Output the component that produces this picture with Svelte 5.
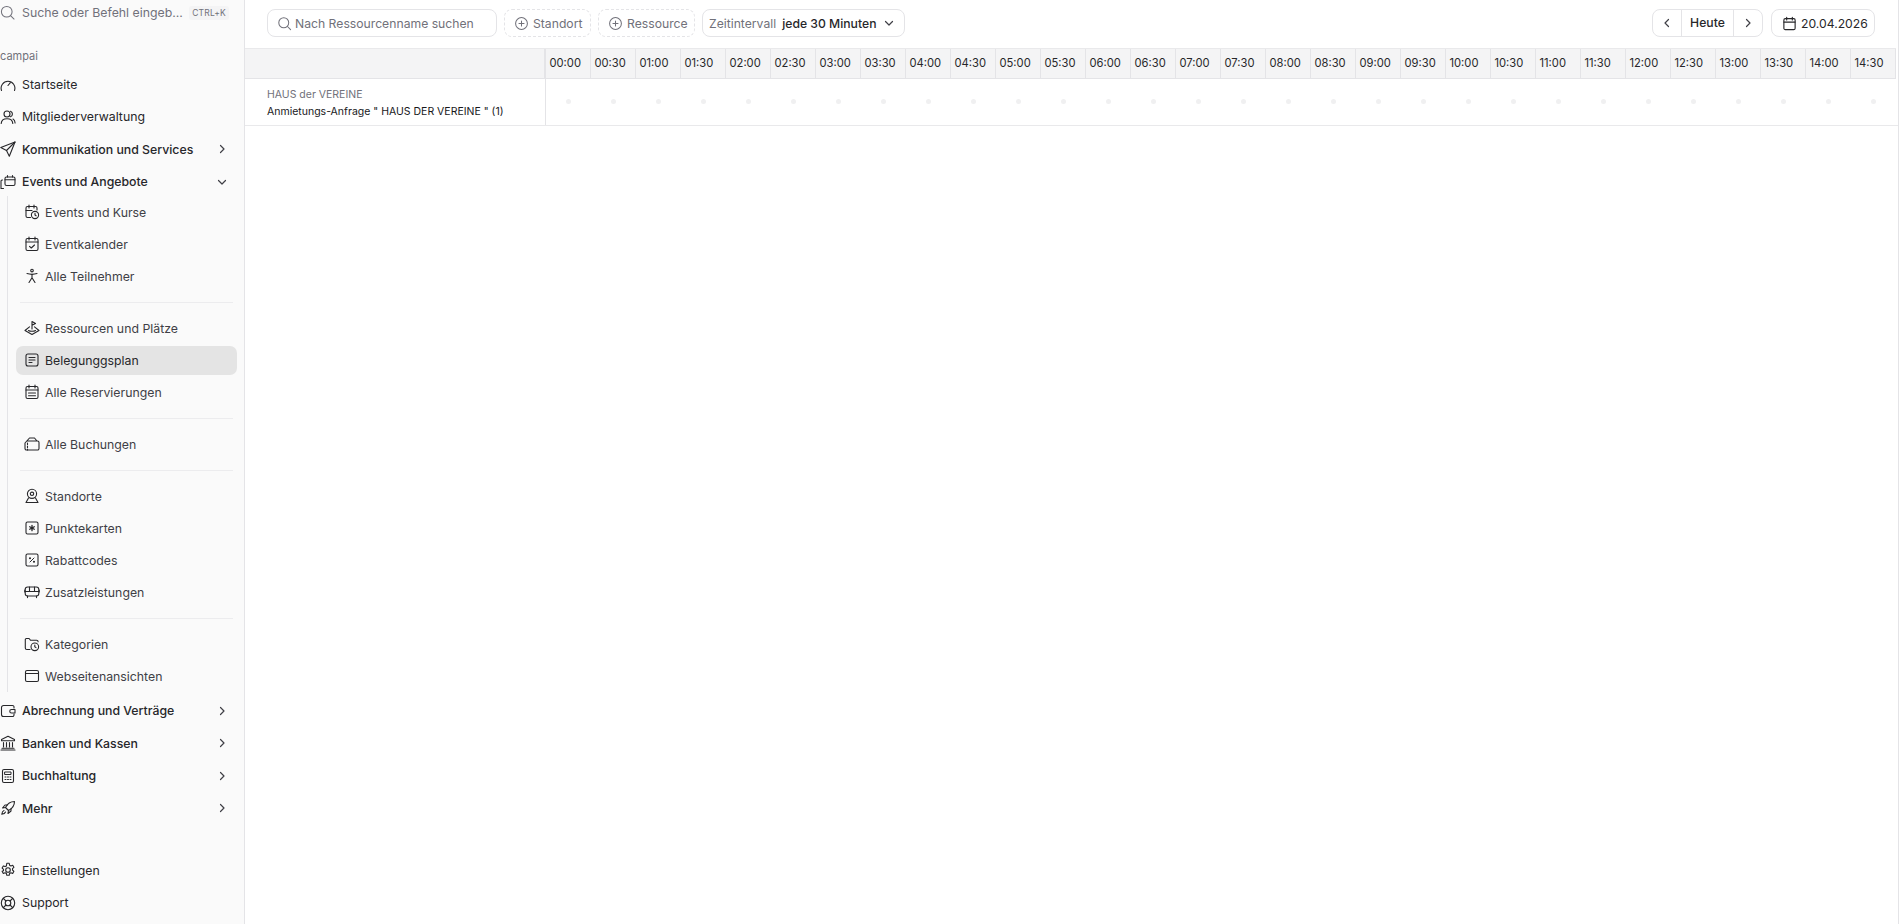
<script lang="ts">
  const icons: Record<string, string> = {
    gauge: '<path d="M1.500 14.500a6.900 6.900 0 1 1 13 0"/><path d="M8 9.500l2.400-2.800"/>',
    users: '<circle cx="7" cy="5" r="3"/><path d="M1.200 14.500c.2-3.200 2.600-4.800 5.800-4.800s5.600 1.600 5.800 4.800"/><path d="M10.500 2.200a3 3 0 0 1 0 5.600"/><path d="M13 10c1.300.7 2 2 2.100 4"/>',
    send: '<path d="M15 1L.8 6.500l5.700 3 2.800 5.700z"/><path d="M15 1L6.500 9.500"/>',
    stack: '<rect x="5" y="3" width="10" height="8.500" rx="1.500"/><path d="M5 5.800h10"/><path d="M7.500 1.500v1.500M12.500 1.500v1.500"/><path d="M2.500 6H2a1 1 0 0 0-1 1v7.500M1 14.500h2.500"/>',
    calclock: '<path d="M6.500 13.500H3.500A1.500 1.500 0 0 1 2 12V4a1.500 1.500 0 0 1 1.500-1.500h8A1.500 1.500 0 0 1 13 4v2"/><path d="M5 1v3M10 1v3M2 6.500h6"/><circle cx="11" cy="11" r="3.600"/><path d="M11 9.300V11l1.100.8"/>',
    calcheck: '<rect x="2" y="2.500" width="12" height="12" rx="1.500"/><path d="M5 1v3M11 1v3M2 6h12"/><path d="M5.500 10.300l1.800 1.700 3.200-3"/>',
    person: '<circle cx="8" cy="2.600" r="1.300"/><path d="M3 5.600c3.200 1 6.800 1 10 0"/><path d="M8 6.200v3.600M8 9.800L5 14.500M8 9.800l3 4.700"/>',
    golf: '<path d="M8 9V1.500l3.500 2L8 5.200"/><path d="M5.500 6.800L1 10.500 8 14.500l7-4-4.500-3.700"/><path d="M4.500 10.500c1.500 1 5.500 1 7 0"/>',
    plan: '<rect x="2" y="2" width="12" height="12" rx="2"/><path d="M5 5.500h6M5 8h6M5 10.500h3"/>',
    callist: '<rect x="2" y="2.500" width="12" height="12" rx="1.500"/><path d="M5 1v3M11 1v3M2 6h12M4.500 9h7M4.500 11.700h7"/>',
    bag: '<path d="M3 5h10.500a1.500 1.500 0 0 1 1.500 1.500v6a1.500 1.500 0 0 1-1.500 1.500H2.500A1.500 1.500 0 0 1 1 12.500V7l4.500-5h5L13 5"/><path d="M3.500 7v7" stroke-dasharray="1.500 1.500"/>',
    pin: '<circle cx="8" cy="5.800" r="4.600"/><circle cx="8" cy="5.800" r="1.700"/><path d="M4.500 10L2 14.500h12L11.500 10"/>',
    star: '<rect x="2" y="2" width="12" height="12" rx="1.500"/><path d="M8 5.300v5.400M5.700 6.700l4.600 2.600M10.300 6.700L5.700 9.300" stroke-width="1.300"/>',
    percent: '<rect x="2" y="2" width="12" height="12" rx="1.500"/><path d="M10 6l-4 4" stroke-width="1"/><circle cx="6" cy="6.200" r=".5"/><circle cx="10" cy="9.800" r=".5"/>',
    bus: '<rect x="1.200" y="3" width="13.600" height="9" rx="2.500"/><path d="M1.200 7.500h13.600M5.500 3v4.500M10.500 3v4.500"/><path d="M3.500 12v1.600M12.500 12v1.600"/><path d="M.8 6v2M15.200 6v2"/>',
    folderclock: '<path d="M6 13.500H2.800A1.500 1.500 0 0 1 1.300 12V3.500A1 1 0 0 1 2.300 2.500h2.800l1.500 1.800h6a1.500 1.500 0 0 1 1.500 1.500"/><circle cx="10.800" cy="10.800" r="3.800"/><path d="M10.800 9v1.800l1.200.8"/>',
    browser: '<rect x="1.500" y="2.500" width="13" height="11" rx="1.500"/><path d="M1.500 5.500h13"/>',
    wallet: '<path d="M14 5V4a1.500 1.500 0 0 0-1.500-1.500h-9A2 2 0 0 0 1.500 4.500v7a2 2 0 0 0 2 2h9a1.500 1.500 0 0 0 1.500-1.500v-1"/><path d="M15 6.500h-3.500a1.750 1.750 0 0 0 0 3.500H15z"/>',
    bank: '<path d="M8 1.200L1.500 4.500v1.300h13V4.500z"/><path d="M3.500 7.500v4.500M6.500 7.500v4.500M9.500 7.500v4.500M12.500 7.500v4.500"/><path d="M2 13.200h12M1 15h14"/>',
    calc: '<rect x="2.500" y="1.500" width="11" height="13" rx="1.500"/><rect x="5" y="4" width="6" height="2.500" stroke-width="1"/><path d="M5 9h1M7.500 9h1M10 9h1M5 11.500h1M7.500 11.500h1M10 11.500h1" stroke-width="1"/>',
    rocket: '<path d="M5.500 7.500C7.500 3.500 10.500 1.500 14.500 1.500c0 4-2 7-6 9z"/><path d="M5.500 7.500l-3 .5 2.500-3h2.500M8.500 10.500l-.5 3 3-2.500V8.500"/><path d="M4 10.500c-1.500.5-2 2-2.200 3.700 1.700-.2 3.200-.7 3.700-2.200"/>',
    cog: '<circle cx="8" cy="8" r="2.300"/><path d="M6.800 1.300h2.400l.4 1.900 1.300.7 1.800-.7 1.200 2.100-1.400 1.300v1.400l1.400 1.300-1.200 2.100-1.800-.7-1.300.7-.4 1.900H6.800l-.4-1.900-1.300-.7-1.800.7-1.200-2.100L3.500 8.700V7.300L2.100 6l1.200-2.100 1.800.7 1.300-.7z"/>',
    lifebuoy: '<circle cx="8" cy="8" r="6.700"/><circle cx="8" cy="8" r="2.800"/><path d="M3.300 3.300L6 6M12.700 3.300L10 6M3.300 12.700L6 10M12.700 12.700L10 10"/>',
  };

  type Item = { label: string; icon: string; active?: boolean };

  const subGroups: Item[][] = [
    [
      { label: "Events und Kurse", icon: "calclock" },
      { label: "Eventkalender", icon: "calcheck" },
      { label: "Alle Teilnehmer", icon: "person" },
    ],
    [
      { label: "Ressourcen und Plätze", icon: "golf" },
      { label: "Belegunggsplan", icon: "plan", active: true },
      { label: "Alle Reservierungen", icon: "callist" },
    ],
    [{ label: "Alle Buchungen", icon: "bag" }],
    [
      { label: "Standorte", icon: "pin" },
      { label: "Punktekarten", icon: "star" },
      { label: "Rabattcodes", icon: "percent" },
      { label: "Zusatzleistungen", icon: "bus" },
    ],
    [
      { label: "Kategorien", icon: "folderclock" },
      { label: "Webseitenansichten", icon: "browser" },
    ],
  ];

  const afterGroups: Item[] = [
    { label: "Abrechnung und Verträge", icon: "wallet" },
    { label: "Banken und Kassen", icon: "bank" },
    { label: "Buchhaltung", icon: "calc" },
    { label: "Mehr", icon: "rocket" },
  ];

  const slots: string[] = [];
  for (let h = 0; h < 15; h++) {
    const hh = String(h).padStart(2, "0");
    slots.push(`${hh}:00`, `${hh}:30`);
  }
</script>

{#snippet icon(name: string)}
  <svg class="ico" viewBox="0 0 16 16" fill="none" stroke="currentColor" stroke-width="1.100" stroke-linecap="round" stroke-linejoin="round">{@html icons[name]}</svg>
{/snippet}

{#snippet chevron(d: string)}
  <svg class="chev" viewBox="0 0 12 12" fill="none" stroke="currentColor" stroke-width="1.200" stroke-linecap="round" stroke-linejoin="round"><path {d} /></svg>
{/snippet}

<div class="page">
  <aside class="sidebar">
    <div class="cmd">
      <svg class="search" viewBox="0 0 16 16" fill="none" stroke="currentColor" stroke-width="1.100" stroke-linecap="round"><circle cx="7.200" cy="7.200" r="5.700" /><path d="M11.500 11.500l3.500 3.500" /></svg>
      <span class="cmd-text">Suche oder Befehl eingeb...</span>
      <span class="kbd">CTRL+K</span>
    </div>

    <div class="org">campai</div>

    <nav class="nav">
      <a class="top light">{@render icon("gauge")}<span>Startseite</span></a>
      <a class="top light">{@render icon("users")}<span>Mitgliederverwaltung</span></a>
      <a class="top">{@render icon("send")}<span>Kommunikation und Services</span>{@render chevron("M4.500 2.500L8 6l-3.500 3.500")}</a>
      <a class="top">{@render icon("stack")}<span>Events und Angebote</span>{@render chevron("M2.500 4.500L6 8l3.500-3.500")}</a>

      <div class="sub">
        {#each subGroups as group, g}
          {#if g > 0}<div class="divider"></div>{/if}
          {#each group as item}
            <a class="subitem" class:active={item.active}>{@render icon(item.icon)}<span>{item.label}</span></a>
          {/each}
        {/each}
      </div>

      {#each afterGroups as item}
        <a class="top">{@render icon(item.icon)}<span>{item.label}</span>{@render chevron("M4.500 2.500L8 6l-3.500 3.500")}</a>
      {/each}
    </nav>

    <div class="bottom">
      <a class="top light">{@render icon("cog")}<span>Einstellungen</span></a>
      <a class="top light">{@render icon("lifebuoy")}<span>Support</span></a>
    </div>
  </aside>

  <main class="main">
    <header class="toolbar">
      <div class="box searchbox">
        <svg class="tool-ico" viewBox="0 0 16 16" fill="none" stroke="currentColor" stroke-width="1.100" stroke-linecap="round"><circle cx="7.200" cy="7.200" r="5.300" /><path d="M11.200 11.200l3.300 3.300" /></svg>
        <span>Nach Ressourcenname suchen</span>
      </div>
      <div class="box dashed dash-standort">
        <svg class="tool-ico" viewBox="0 0 16 16" fill="none" stroke="currentColor" stroke-width="1.100" stroke-linecap="round"><circle cx="8" cy="8" r="6.300" /><path d="M8 5.300v5.400M5.300 8h5.400" /></svg>
        <span>Standort</span>
      </div>
      <div class="box dashed dash-ressource">
        <svg class="tool-ico" viewBox="0 0 16 16" fill="none" stroke="currentColor" stroke-width="1.100" stroke-linecap="round"><circle cx="8" cy="8" r="6.300" /><path d="M8 5.300v5.400M5.300 8h5.400" /></svg>
        <span>Ressource</span>
      </div>
      <div class="box interval">
        <span>Zeitintervall</span>
        <b>jede 30 Minuten</b>
        {@render chevron("M2.500 4.500L6 8l3.500-3.500")}
      </div>

      <div class="spacer"></div>

      <div class="pager">
        <button aria-label="Zurück">{@render chevron("M7.500 2.500L4 6l3.500 3.500")}</button>
        <span>Heute</span>
        <button aria-label="Weiter">{@render chevron("M4.500 2.500L8 6l-3.500 3.500")}</button>
      </div>
      <div class="box datebox">
        <svg class="tool-ico" viewBox="0 0 16 16" fill="none" stroke="currentColor" stroke-width="1.200" stroke-linecap="round" stroke-linejoin="round"><rect x="2" y="2.800" width="12" height="11.700" rx="1.500" /><path d="M5 1.300v3M11 1.300v3M2 6.500h12" /></svg>
        <span>20.04.2026</span>
      </div>
    </header>

    <div class="grid">
      <div class="head">
        <div class="corner"></div>
        {#each slots as slot}
          <div class="slot">{slot}</div>
        {/each}
      </div>
      <div class="row">
        <div class="res">
          <div class="res-loc">HAUS der VEREINE</div>
          <div class="res-name">Anmietungs-Anfrage " HAUS DER VEREINE " (1)</div>
        </div>
        {#each slots as slot}
          <div class="cell"><i></i></div>
        {/each}
      </div>
    </div>
  </main>
</div>

<style>
  :global(body) {
    margin: 0;
    background: #fff;
    font-family: Inter, "Liberation Sans", sans-serif;
    color: #18181b;
  }

  .page {
    display: flex;
    height: 924px;
    overflow: hidden;
  }

  .sidebar {
    width: 245px;
    flex: none;
    box-sizing: border-box;
    display: flex;
    flex-direction: column;
    background: #fafafa;
    border-right: 1px solid #e4e4e7;
    font-size: 12.300px;
  }

  .cmd {
    display: flex;
    align-items: center;
    height: 25px;
    color: #71717a;
  }

  .search {
    width: 15px;
    height: 15px;
    flex: none;
    margin: 0 7px 0 0;
  }

  .cmd-text {
    flex: 1;
    white-space: nowrap;
  }

  .kbd {
    font-size: 8.500px;
    color: #71717a;
    background: #f4f4f5;
    border-radius: 3px;
    padding: 2px 3px;
    margin-right: 15px;
    letter-spacing: 0.200px;
  }

  .org {
    margin-top: 24px;
    font-size: 11px;
    line-height: 14px;
    color: #71717a;
    margin-bottom: 5px;
  }

  .nav {
    display: flex;
    flex-direction: column;
  }

  .top {
    display: flex;
    align-items: center;
    height: 32.500px;
    font-weight: 500;
    color: #27272a;
  }

  .top.light {
    font-weight: 400;
  }

  .top .ico {
    margin-right: 6px;
  }

  .top span {
    flex: 1;
  }

  .ico {
    width: 16px;
    height: 16px;
    flex: none;
    color: #27272a;
  }

  .chev {
    width: 12px;
    height: 12px;
    flex: none;
    margin-right: 16px;
    color: #3f3f46;
  }

  .sub {
    margin: -1.600px 0 2px 7px;
    width: 230px;
    border-left: 1px solid #e4e4e7;
    padding: 0 0 0 8px;
    box-sizing: border-box;
    display: flex;
    flex-direction: column;
  }

  .subitem {
    display: flex;
    align-items: center;
    height: 29px;
    margin: 1.500px 0;
    padding-left: 8px;
    border-radius: 7px;
    color: #3f3f46;
  }

  .subitem .ico {
    margin-right: 5px;
  }

  .subitem.active {
    background: #e4e4e4;
    color: #27272a;
  }

  .divider {
    height: 1px;
    background: #ececee;
    margin: 9.500px 4px;
  }

  .bottom {
    margin-top: auto;
    padding-bottom: 5px;
  }

  .main {
    flex: 1;
    min-width: 0;
    display: flex;
    flex-direction: column;
    margin-right: 2px;
    border-right: 1px solid #e4e4e7;
  }

  .toolbar {
    display: flex;
    align-items: center;
    gap: 7px;
    height: 48px;
    box-sizing: border-box;
    padding: 0 23px 2px 22px;
    font-size: 12.200px;
  }

  .spacer {
    flex: 1;
  }

  .box {
    display: flex;
    align-items: center;
    height: 28px;
    box-sizing: border-box;
    border: 1px solid #e4e4e7;
    border-radius: 8px;
    color: #71717a;
    white-space: nowrap;
  }

  .tool-ico {
    width: 15px;
    height: 15px;
    flex: none;
  }

  .searchbox {
    width: 230px;
    padding-left: 9px;
    gap: 3px;
  }

  .dashed {
    border-style: dashed;
    padding-left: 9px;
    gap: 4px;
  }

  .dash-standort {
    width: 87px;
  }

  .dash-ressource {
    width: 97px;
  }

  .interval {
    width: 203px;
    padding-left: 6px;
    gap: 6px;
  }

  .interval b {
    font-weight: 500;
    color: #27272a;
  }

  .interval .chev {
    margin: 0 9px 0 auto;
  }

  .pager {
    display: flex;
    align-items: center;
    height: 28px;
    width: 111px;
    box-sizing: border-box;
    border: 1px solid #e4e4e7;
    border-radius: 8px;
    color: #27272a;
    margin-right: 1px;
  }

  .pager button {
    width: 28px;
    height: 100%;
    padding: 0;
    display: flex;
    align-items: center;
    justify-content: center;
    border: 0;
    background: none;
    color: #18181b;
    flex: none;
  }

  .pager .chev {
    margin: 0;
  }

  .pager span {
    flex: 1;
    text-align: center;
    font-weight: 500;
    line-height: 26px;
    border-left: 1px solid #e4e4e7;
    border-right: 1px solid #e4e4e7;
  }

  .datebox {
    width: 104px;
    padding-left: 10px;
    gap: 4px;
    color: #27272a;
  }

  .grid {
    font-size: 11.200px;
  }

  .head {
    display: flex;
    height: 31px;
    box-sizing: border-box;
    background: #f4f4f5;
    border-top: 1px solid #e9e9eb;
    border-bottom: 1px solid #e4e4e7;
    margin-right: 2px;
  }

  .corner,
  .res {
    width: 301px;
    flex: none;
    box-sizing: border-box;
    border-right: 2px solid #e4e4e7;
  }

  .slot {
    width: 45px;
    flex: none;
    box-sizing: border-box;
    padding-left: 3.500px;
    line-height: 29px;
    border-right: 1px solid #e4e4e7;
    color: #27272a;
  }

  .row {
    display: flex;
    height: 47px;
    box-sizing: border-box;
    border-bottom: 1px solid #e9e9eb;
  }

  .res {
    padding: 6.500px 0 0 22px;
    border-right-width: 1px;
    font-size: 10.500px;
    line-height: 17px;
  }

  .res-loc {
    color: #71717a;
  }

  .res-name {
    color: #18181b;
    white-space: nowrap;
  }

  .cell {
    width: 45px;
    flex: none;
    display: flex;
    justify-content: center;
    padding-top: 20px;
    box-sizing: border-box;
  }

  .cell i {
    width: 5px;
    height: 5px;
    border-radius: 50%;
    background: #f0f0f1;
  }
</style>
